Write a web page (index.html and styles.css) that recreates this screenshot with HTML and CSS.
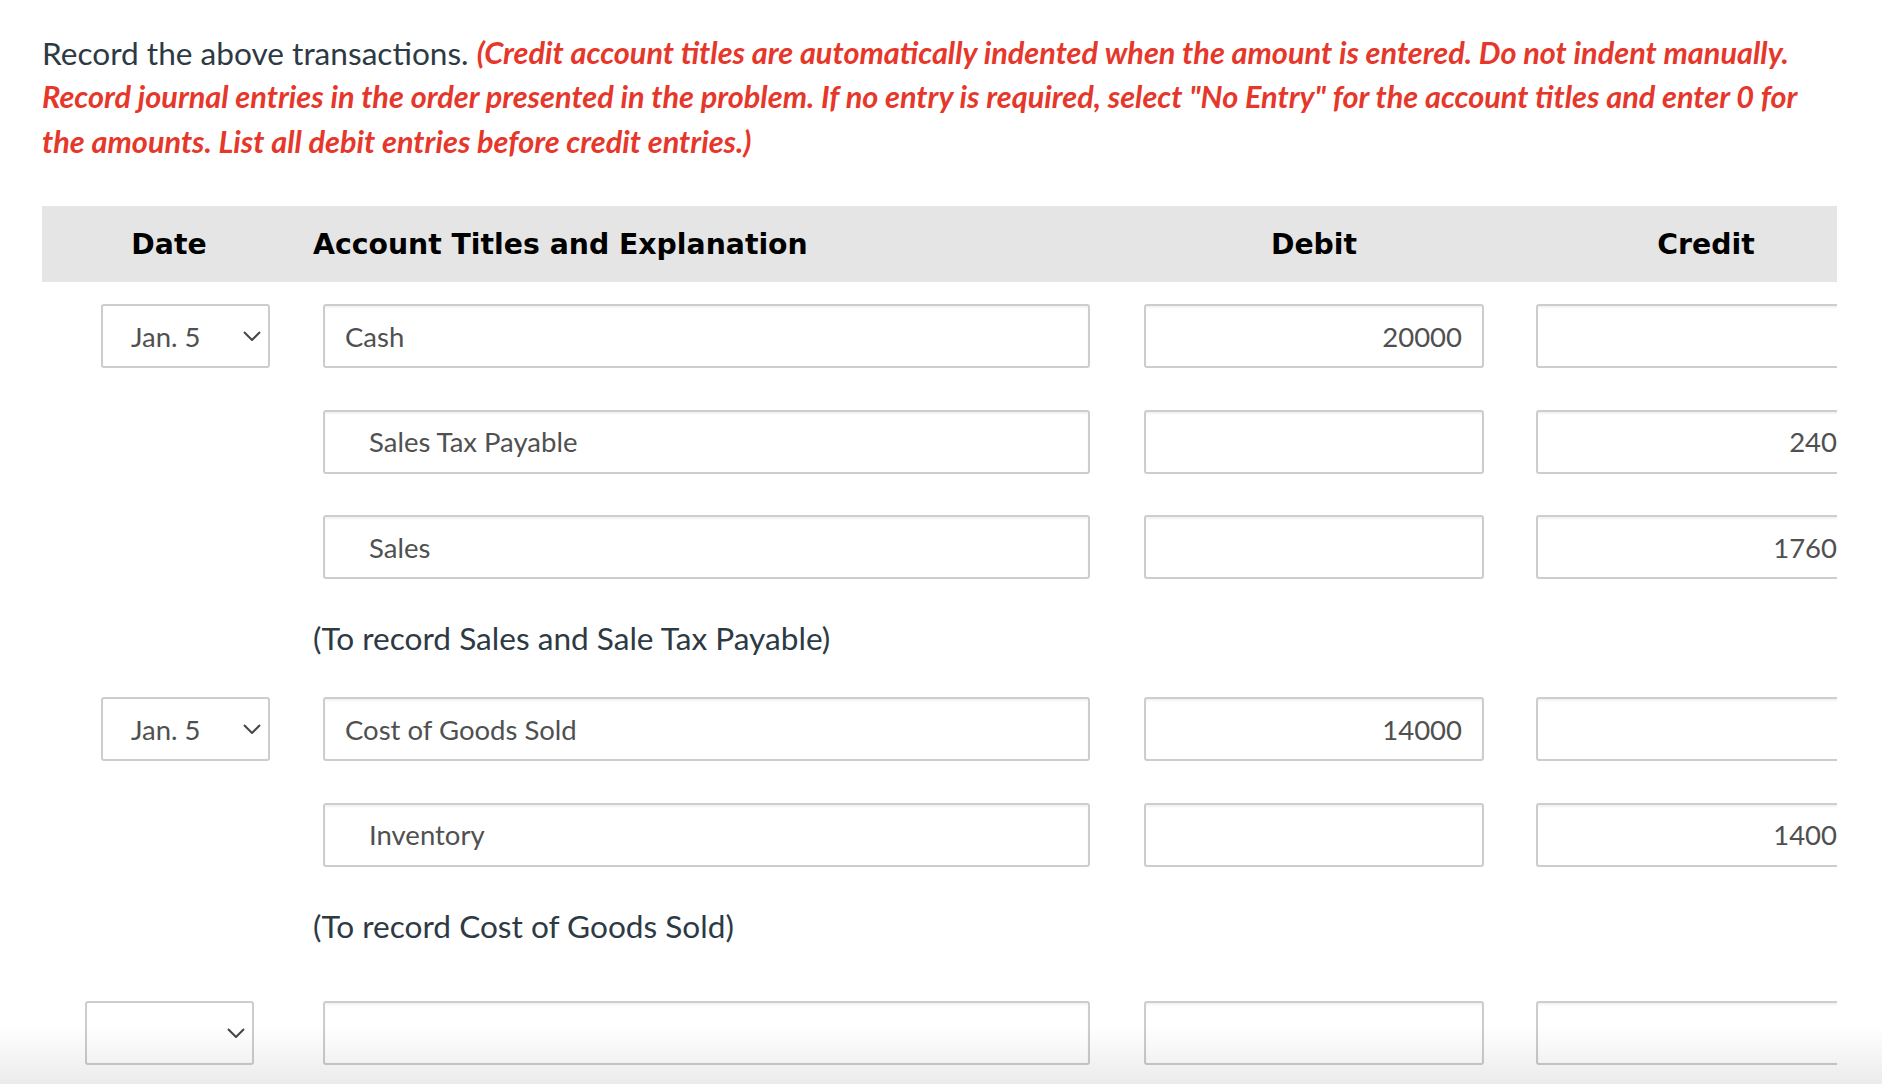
FILE: index.html
```html
<!DOCTYPE html>
<html lang="en">
<head>
<meta charset="utf-8">
<title>Journal Entry</title>
<link rel="stylesheet" href="styles.css">
</head>
<body>
<div class="page">
  <p class="instructions">Record the above transactions. <span class="note">(Credit account titles are automatically indented when the amount is entered. Do not indent manually. Record journal entries in the order presented in the problem. If no entry is required, select "No Entry" for the account titles and enter 0 for the amounts. List all debit entries before credit entries.)</span></p>

  <div class="journal">
    <div class="head">
      <div class="h-date">Date</div>
      <div class="h-acct">Account Titles and Explanation</div>
      <div class="h-amt">Debit</div>
      <div class="h-amt h-credit">Credit</div>
    </div>

    <div class="entries">
      <div class="row">
        <div class="cell-date">
          <div class="select"><span class="select-val">Jan. 5</span><svg class="chev" viewBox="0 0 18 10" width="18" height="10"><path d="M1 1 L9 9 L17 1"/></svg></div>
        </div>
        <input class="field acct" type="text" value="Cash">
        <input class="field amt" type="text" value="20000">
        <input class="field amt credit" type="text" value="">
      </div>
      <div class="row">
        <div class="cell-date"></div>
        <input class="field acct indent" type="text" value="Sales Tax Payable">
        <input class="field amt" type="text" value="">
        <input class="field amt credit" type="text" value="240">
      </div>
      <div class="row">
        <div class="cell-date"></div>
        <input class="field acct indent" type="text" value="Sales">
        <input class="field amt" type="text" value="">
        <input class="field amt credit" type="text" value="1760">
      </div>
      <div class="expl">(To record Sales and Sale Tax Payable)</div>

      <div class="row">
        <div class="cell-date">
          <div class="select"><span class="select-val">Jan. 5</span><svg class="chev" viewBox="0 0 18 10" width="18" height="10"><path d="M1 1 L9 9 L17 1"/></svg></div>
        </div>
        <input class="field acct" type="text" value="Cost of Goods Sold">
        <input class="field amt" type="text" value="14000">
        <input class="field amt credit" type="text" value="">
      </div>
      <div class="row">
        <div class="cell-date"></div>
        <input class="field acct indent" type="text" value="Inventory">
        <input class="field amt" type="text" value="">
        <input class="field amt credit" type="text" value="1400">
      </div>
      <div class="expl">(To record Cost of Goods Sold)</div>

      <div class="row new-entry">
        <div class="cell-date cell-date-new">
          <div class="select"><span class="select-val"></span><svg class="chev" viewBox="0 0 18 10" width="18" height="10"><path d="M1 1 L9 9 L17 1"/></svg></div>
        </div>
        <input class="field acct" type="text" value="">
        <input class="field amt" type="text" value="">
        <input class="field amt credit" type="text" value="">
      </div>
    </div>
  </div>
</div>
<div class="fade"></div>
</body>
</html>
```
FILE: styles.css
```css
html, body {
  margin: 0;
  padding: 0;
  background: #ffffff;
  overflow: hidden;
}

body {
  font-family: "Lato", "Liberation Sans", sans-serif;
  color: #2d3a44;
}

.page {
  padding: 31px 0 0 42px;
  width: 1795px;
}

.instructions {
  margin: 0;
  font-size: 31.6px;
  line-height: 44.4px;
  color: #2d3a44;
}

.note {
  color: #e6372b;
  font-style: italic;
  font-weight: 700;
  font-size: 30.7px;
  line-height: 44.4px;
  vertical-align: top;
}

.journal {
  margin-top: 42px;
  width: 1795px;
  overflow: hidden;
}

.head {
  display: flex;
  align-items: center;
  height: 76px;
  background: #e5e5e5;
  font-family: "DejaVu Sans", "Verdana", sans-serif;
  font-weight: 700;
  font-size: 28.3px;
  color: #000;
}

.h-date {
  flex: 0 0 auto;
  width: 254px;
  padding-right: 17px;
  text-align: center;
}

.h-acct {
  flex: 0 0 auto;
  width: 777px;
}

.h-amt {
  flex: 0 0 auto;
  width: 340px;
  margin-left: 54px;
  text-align: center;
}

.h-credit {
  margin-left: 52px;
}

.entries {
  padding-top: 22px;
}

.row {
  display: flex;
  align-items: center;
  height: 64px;
  width: 2000px;
}

.row + .row {
  margin-top: 41.5px;
}

.row.new-entry {
  margin-top: 58.5px;
}

.cell-date {
  flex: 0 0 auto;
  width: 222px;
  padding-left: 59px;
  height: 64px;
}

.cell-date-new {
  width: 238px;
  padding-left: 43px;
}

.select {
  box-sizing: border-box;
  width: 169px;
  height: 64px;
  border: 2px solid #cdcdcd;
  border-radius: 3px;
  background: #fff;
  display: flex;
  align-items: center;
  justify-content: space-between;
  padding: 0 7px 0 28px;
  font-size: 27.5px;
  color: #505050;
}

.chev {
  display: block;
  fill: none;
  stroke: #454545;
  stroke-width: 2;
}

.field {
  flex: 0 0 auto;
  box-sizing: border-box;
  height: 64px;
  margin: 0;
  border: 2px solid #cdcdcd;
  border-radius: 3px;
  box-shadow: inset 0 2px 2px rgba(0, 0, 0, 0.05);
  background: #fff;
  font-family: "Lato", "Liberation Sans", sans-serif;
  font-size: 27.5px;
  color: #505050;
  outline: none;
}

.acct {
  width: 767px;
  padding: 0 20px;
}

.acct.indent {
  padding-left: 44px;
}

.amt {
  width: 340px;
  margin-left: 54px;
  padding: 0 20px;
  text-align: right;
}

.amt.credit {
  margin-left: 52px;
  padding-right: 37px;
}

.expl {
  margin: 42px 0;
  height: 34px;
  line-height: 34px;
  padding-left: 271px;
  font-size: 31.6px;
  color: #2d3a44;
}

.fade {
  position: fixed;
  left: 0;
  right: 0;
  bottom: 0;
  height: 58px;
  background: linear-gradient(to bottom, rgba(0, 0, 0, 0), rgba(0, 0, 0, 0.08));
  pointer-events: none;
}
```
